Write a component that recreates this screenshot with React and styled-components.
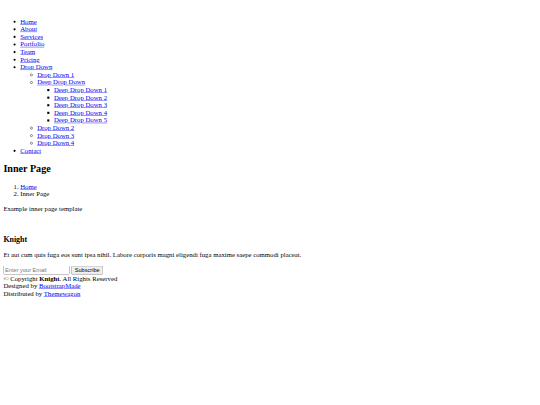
import React from 'react'
import styled, { createGlobalStyle } from 'styled-components'

const Global = createGlobalStyle`
  html, body {
    margin: 0;
    overflow: hidden;
    background: #fff;
  }
  a {
    color: #0000ee;
    text-decoration: underline;
  }
`

const Frame = styled.div`
  width: 540px;
  height: 405px;
  overflow: hidden;
`

// the page is laid out at 1280px and shown at 540px, like the reference shot
const Page = styled.div`
  width: 1264px;
  height: 944px;
  padding: 8px;
  font-family: 'Liberation Serif', 'Times New Roman', serif;
  font-size: 16px;
  color: #000;
  transform: scale(0.421875);
  transform-origin: 0 0;
`

const Header = styled.header`
  display: block;
`

const Logo = styled.div`
  height: 18px;
`

const NavList = styled.ul`
  margin: ${p => (p.$nested ? '0' : '16px 0')};
  padding-left: 40px;
  list-style-type: ${p => p.$type || 'disc'};
`

const Item = styled.li`
  line-height: normal;
`

const PageTitle = styled.h2`
  font-size: 24px;
  font-weight: bold;
  margin: 19.92px 0;
`

const Crumbs = styled.ol`
  margin: 16px 0;
  padding-left: 40px;
`

const Text = styled.p`
  margin: 16px 0;
`

const Gap = styled.div`
  height: 18px;
`

const FooterTitle = styled.h3`
  font-size: 18.72px;
  font-weight: bold;
  margin: 18.72px 0;
`

const Form = styled.form`
  margin: 0;
`

const EmailInput = styled.input`
  box-sizing: border-box;
  width: 157px;
  height: 21px;
  font-family: 'Liberation Sans', Arial, sans-serif;
  font-size: 13.333px;
`

const SubmitButton = styled.input`
  font-family: 'Liberation Sans', Arial, sans-serif;
  font-size: 13.333px;
`

const Line = styled.div``

const deep = [1, 2, 3, 4, 5]

export default function App() {
  return (
    <Frame>
      <Global />
      <Page>
        <Header>
          <Logo />
          <nav>
            <NavList>
              <Item><a href="#">Home</a></Item>
              <Item><a href="#">About</a></Item>
              <Item><a href="#">Services</a></Item>
              <Item><a href="#">Portfolio</a></Item>
              <Item><a href="#">Team</a></Item>
              <Item><a href="#">Pricing</a></Item>
              <Item>
                <a href="#">Drop Down</a>
                <NavList $nested $type="circle">
                  <Item><a href="#">Drop Down 1</a></Item>
                  <Item>
                    <a href="#">Deep Drop Down</a>
                    <NavList $nested $type="square">
                      {deep.map(n => (
                        <Item key={n}><a href="#">Deep Drop Down {n}</a></Item>
                      ))}
                    </NavList>
                  </Item>
                  <Item><a href="#">Drop Down 2</a></Item>
                  <Item><a href="#">Drop Down 3</a></Item>
                  <Item><a href="#">Drop Down 4</a></Item>
                </NavList>
              </Item>
              <Item><a href="#">Contact</a></Item>
            </NavList>
          </nav>
        </Header>

        <main>
          <section>
            <PageTitle>Inner Page</PageTitle>
            <Crumbs>
              <li><a href="#">Home</a></li>
              <li>Inner Page</li>
            </Crumbs>
          </section>
          <section>
            <Text>Example inner page template</Text>
          </section>
        </main>

        <footer>
          <Gap />
          <FooterTitle>Knight</FooterTitle>
          <Text>Et aut cum quis fuga eos sunt ipsa nihil. Labore corporis magni eligendi fuga maxime saepe commodi placeat.</Text>
          <Form onSubmit={e => e.preventDefault()}>
            <EmailInput type="email" name="email" placeholder="Enter your Email" />{' '}
            <SubmitButton type="submit" value="Subscribe" />
          </Form>
          <Line>
            &copy; Copyright <strong>Knight</strong>. All Rights Reserved
          </Line>
          <Line>
            Designed by <a href="#">BootstrapMade</a>
            <br />
            Distributed by <a href="#">Themewagon</a>
          </Line>
        </footer>
      </Page>
    </Frame>
  )
}
